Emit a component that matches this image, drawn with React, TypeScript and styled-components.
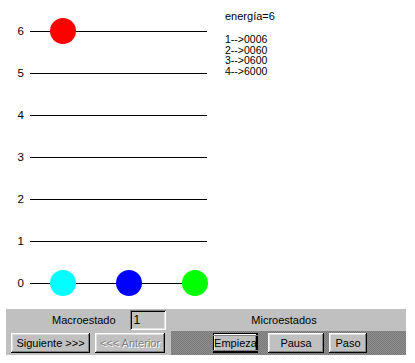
import styled, { createGlobalStyle, css } from "styled-components";

const GlobalStyle = createGlobalStyle`
  html, body {
    margin: 0;
    padding: 0;
    background: #ffffff;
  }
  body {
    font-family: "Liberation Sans", Arial, sans-serif;
    font-size: 11px;
    color: #000;
  }
`;

const levels = [6, 5, 4, 3, 2, 1, 0];

// particles sitting on a level: x offset inside the track, colour
const particles: { level: number; left: number; color: string }[] = [
  { level: 6, left: 20, color: "#ff0000" },
  { level: 0, left: 20, color: "#00ffff" },
  { level: 0, left: 86, color: "#0000ff" },
  { level: 0, left: 152, color: "#00ff00" },
];

const microstates = ["1-->0006", "2-->0060", "3-->0600", "4-->6000"];

function App() {
  return (
    <>
      <GlobalStyle />
      <Page>
        <Board>
          <Levels>
            {levels.map((lv) => (
              <LevelRow key={lv}>
                <LevelLabel>{lv}</LevelLabel>
                <Track>
                  {particles
                    .filter((p) => p.level === lv)
                    .map((p, i) => (
                      <Particle key={i} $left={p.left} $color={p.color} />
                    ))}
                </Track>
              </LevelRow>
            ))}
          </Levels>
          <Info>
            <Energy>energía=6</Energy>
            <StateList>
              {microstates.map((s) => (
                <div key={s}>{s}</div>
              ))}
            </StateList>
          </Info>
        </Board>

        <Panel>
          <Cell $pad="0 0 0 46px">
            <Caption $mr={14}>Macroestado</Caption>
            <Field>1</Field>
          </Cell>
          <Cell $pad="0 9px 0 0" $center>
            <Caption>Microestados</Caption>
          </Cell>
          <Cell $pad="2px 0 0 5px" $top>
            <Button $w={79}>Siguiente &gt;&gt;&gt;</Button>
            <Button $w={70} $ml={5} disabled>
              &lt;&lt;&lt; Anterior
            </Button>
          </Cell>
          <Cell $pad="2px 0 0 42px" $top $dither>
            <Button $w={45} $focused>
              <FocusRing>Empieza</FocusRing>
            </Button>
            <Button $w={56} $ml={10}>
              Pausa
            </Button>
            <Button $w={38} $ml={5}>
              Paso
            </Button>
          </Cell>
        </Panel>
      </Page>
    </>
  );
}

const Page = styled.div`
  width: 415px;
  height: 363px;
  overflow: hidden;
`;

const Board = styled.div`
  display: flex;
  padding-top: 10px;
  height: 294px;
`;

const Levels = styled.div`
  width: 207px;
  display: flex;
  flex-direction: column;
`;

const LevelRow = styled.div`
  height: 42px;
  display: flex;
  align-items: flex-start;
`;

const LevelLabel = styled.div`
  width: 24px;
  text-align: right;
  font-size: 11.5px;
  line-height: 43px;
  margin-right: 6px;
`;

const Track = styled.div`
  position: relative;
  margin-top: 21px;
  width: 177px;
  height: 1px;
  background: #000;
`;

const Particle = styled.div<{ $left: number; $color: string }>`
  position: absolute;
  top: -13px;
  left: ${(p) => p.$left}px;
  width: 26px;
  height: 26px;
  border-radius: 50%;
  background: ${(p) => p.$color};
`;

const Info = styled.div`
  margin-left: 18px;
  font-size: 11px;
`;

const Energy = styled.div`
  line-height: 13px;
  height: 24px;
`;

const StateList = styled.div`
  font-size: 10.5px;
  line-height: 10.5px;
`;

const Panel = styled.div`
  margin: 5px 0 0 6px;
  width: 400px;
  display: grid;
  grid-template-columns: 165px 235px;
  grid-template-rows: 22px 24px;
  background: #c0c0c0;
`;

const Cell = styled.div<{
  $pad?: string;
  $center?: boolean;
  $top?: boolean;
  $dither?: boolean;
}>`
  display: flex;
  align-items: ${(p) => (p.$top ? "flex-start" : "center")};
  justify-content: ${(p) => (p.$center ? "center" : "flex-start")};
  padding: ${(p) => p.$pad || "0"};
  box-sizing: border-box;
  ${(p) =>
    p.$dither &&
    css`
      background-color: #808080;
      background-image: conic-gradient(
        #8e8e8e 25%,
        #7a7a7a 0 50%,
        #8e8e8e 0 75%,
        #7a7a7a 0
      );
      background-size: 2px 2px;
    `}
`;

const Caption = styled.span<{ $mr?: number }>`
  font-size: 11px;
  margin-right: ${(p) => p.$mr || 0}px;
`;

const Field = styled.div`
  width: 36px;
  height: 20px;
  box-sizing: border-box;
  padding: 3px 0 0 4px;
  font-size: 12px;
  line-height: 14px;
  background: #c0c0c0;
  box-shadow: inset 1px 1px #808080, inset -1px -1px #ffffff,
    inset 2px 2px #000000, inset -2px -2px #dfdfdf;
`;

const Button = styled.button<{ $w: number; $ml?: number; $focused?: boolean }>`
  width: ${(p) => p.$w}px;
  height: 20px;
  margin-left: ${(p) => p.$ml || 0}px;
  padding: 0;
  border: none;
  background: #c0c0c0;
  font-family: "Liberation Sans", Arial, sans-serif;
  font-size: 11px;
  color: #000;
  display: flex;
  align-items: center;
  justify-content: center;
  box-shadow: inset -1px -1px #000000, inset 1px 1px #ffffff,
    inset -2px -2px #808080, inset 2px 2px #dfdfdf;

  ${(p) =>
    p.$focused &&
    css`
      box-shadow: inset 0 0 0 1px #000, inset -2px -2px #000000,
        inset 2px 2px #ffffff, inset -3px -3px #808080;
    `}

  &:disabled {
    color: #808080;
    text-shadow: 1px 1px #ffffff;
  }
`;

const FocusRing = styled.span`
  display: block;
  padding: 1px 1px;
  border: 1px solid #808080;
  line-height: 12px;
`;

export default App;
